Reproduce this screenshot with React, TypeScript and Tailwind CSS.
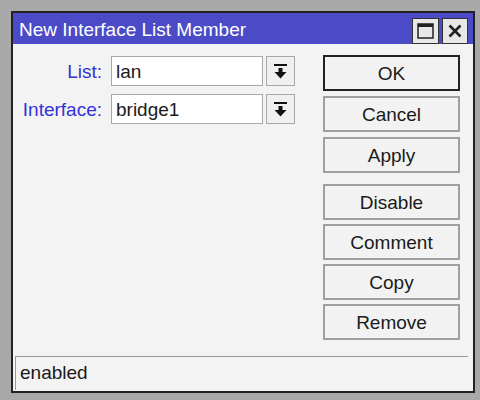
import React from "react";

const font = { fontFamily: '"Liberation Sans", Arial, sans-serif' };

function DropIcon() {
  return (
    <svg width="13" height="15" viewBox="0 0 13 15">
      <rect x="0" y="0" width="13" height="2" fill="#111" />
      <path d="M4.5 4h4v4h4l-6 6.5l-6-6.5h4z" fill="#111" />
    </svg>
  );
}

function Field({ label, value }: { label: string; value: string }) {
  return (
    <div className="flex items-center h-[30px]">
      <div className="w-[89px] text-right text-[19px] text-[#3232d8] leading-none">{label}</div>
      <div className="ml-[9px] w-[152px] h-[30px] bg-white border border-[#a8a8a8] flex items-center pl-[4px] text-[19px] text-[#1a1a1a] leading-none">
        {value}
      </div>
      <div className="ml-[3px] w-[29px] h-[30px] bg-[#f0f0f0] border border-[#a8a8a8] flex items-center justify-center">
        <DropIcon />
      </div>
    </div>
  );
}

function Btn({ label, primary }: { label: string; primary?: boolean }) {
  return (
    <div
      className={
        "w-[137px] h-[36px] flex items-center justify-center text-[19px] text-[#1a1a1a] leading-none bg-[#f2f2f2] " +
        (primary ? "border-2 border-[#222]" : "border-2 border-[#a0a0a0]")
      }
    >
      {label}
    </div>
  );
}

export default function App() {
  return (
    <div className="w-[480px] h-[400px] bg-[#a9a9a9] pt-[11px] pl-[11px]" style={font}>
      <div className="w-[464px] h-[382px] border-2 border-[#222] bg-[#f3f3f3] flex flex-col">
        <div className="h-[31px] bg-[#4b4bc8] flex items-center justify-between pl-[6px] pr-[5px]">
          <span className="text-white text-[19px] leading-none pt-[2px]">New Interface List Member</span>
          <div className="flex gap-[3px] pt-[4px]">
            <div className="w-[27px] h-[26px] bg-[#e8e8e8] border border-[#333] flex items-center justify-center">
              <svg width="17" height="16" viewBox="0 0 17 16">
                <rect x="1" y="1" width="15" height="14" fill="none" stroke="#222" strokeWidth="1.5" />
                <rect x="1" y="1" width="15" height="3" fill="#222" />
              </svg>
            </div>
            <div className="w-[26px] h-[26px] bg-[#e8e8e8] border border-[#333] flex items-center justify-center">
              <svg width="14" height="14" viewBox="0 0 14 14">
                <path d="M1.5 1.5l11 11M12.5 1.5l-11 11" stroke="#222" strokeWidth="2.6" />
              </svg>
            </div>
          </div>
        </div>
        <div className="flex-1 flex justify-between pr-[13px]">
          <div className="flex flex-col gap-[8px] pt-[12px]">
            <Field label="List:" value="lan" />
            <Field label="Interface:" value="bridge1" />
          </div>
          <div className="flex flex-col pt-[11px]">
            <div className="flex flex-col gap-[5px]">
              <Btn label="OK" primary />
              <Btn label="Cancel" />
              <Btn label="Apply" />
            </div>
            <div className="flex flex-col gap-[4px] mt-[11px]">
              <Btn label="Disable" />
              <Btn label="Comment" />
              <Btn label="Copy" />
              <Btn label="Remove" />
            </div>
          </div>
        </div>
        <div className="ml-[2px] mr-[5px] mb-[1px] h-[34px] border-t border-l border-[#9a9a9a] flex items-center pl-[4px] pb-[2px] text-[19px] text-[#1a1a1a] leading-none">
          enabled
        </div>
      </div>
    </div>
  );
}
